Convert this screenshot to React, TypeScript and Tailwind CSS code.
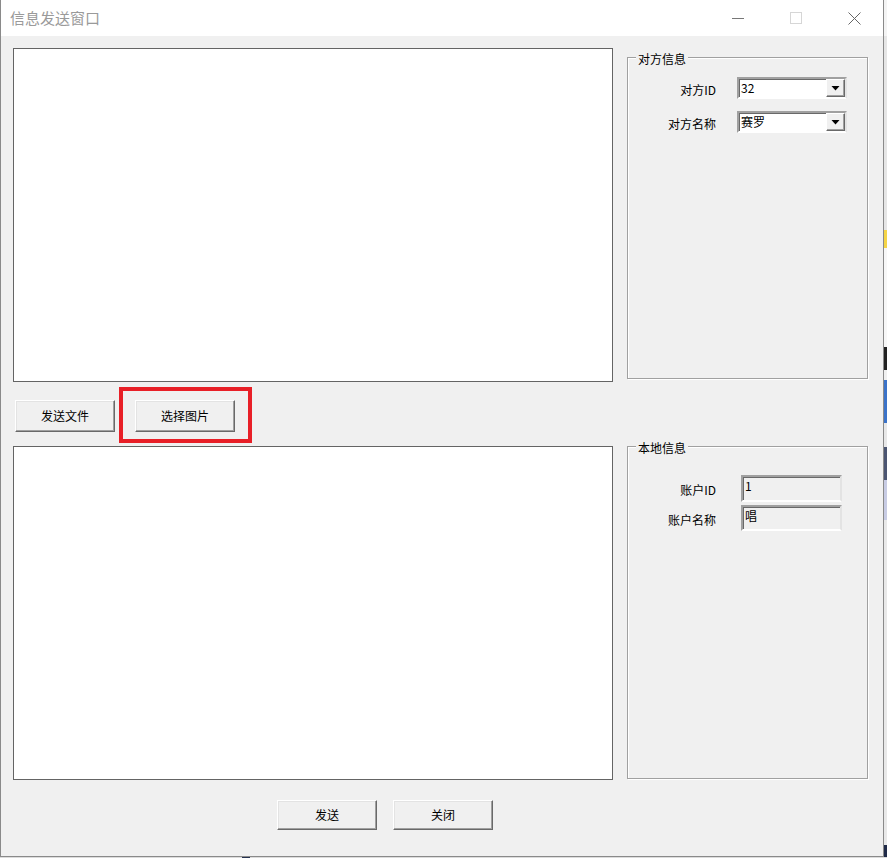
import React from "react";

const font = { fontFamily: '"Noto Sans CJK SC", "Noto Sans", sans-serif' };

function RaisedButton({ label, className = "" }: { label: string; className?: string }) {
  return (
    <button
      className={`h-full w-[100px] bg-[#f0f0f0] border border-t-white border-l-white border-b-[#696969] border-r-[#696969] shadow-[inset_-1px_-1px_0_#a0a0a0,inset_1px_1px_0_#e3e3e3] text-[12px] text-black leading-none ${className}`}
    >
      {label}
    </button>
  );
}

function Combo({ value }: { value: string }) {
  return (
    <div className="w-[110px] h-[22px] flex bg-white border-2 border-t-[#a0a0a0] border-l-[#a0a0a0] border-b-white border-r-[#e3e3e3] shadow-[inset_1px_1px_0_#696969]">
      <div className="flex-1 pl-[2px] pt-[1px] text-[12px] leading-[16px] text-black">{value}</div>
      <div className="w-[19px] h-[18px] flex items-center justify-center bg-[#f0f0f0] border border-t-white border-l-white border-b-[#696969] border-r-[#696969] shadow-[inset_-1px_-1px_0_#a0a0a0]">
        <svg width="9" height="5" viewBox="0 0 9 5">
          <path d="M0.5 0h8L4.5 4.5z" fill="#000" />
        </svg>
      </div>
    </div>
  );
}

function ReadBox({ value, h }: { value: string; h: string }) {
  return (
    <div
      className={`w-[101px] ${h} bg-[#f0f0f0] border-2 border-t-[#a0a0a0] border-l-[#a0a0a0] border-b-white border-r-[#e3e3e3] shadow-[inset_1px_1px_0_#696969] pl-[2px] pt-[1px] text-[12px] leading-[16px] text-black`}
    >
      {value}
    </div>
  );
}

function Group({ title, className, children }: { title: string; className: string; children: React.ReactNode }) {
  return (
    <div
      className={`relative w-[241px] border border-[#a0a0a0] shadow-[inset_1px_1px_0_#fff,1px_1px_0_#fff] ${className}`}
    >
      <span className="absolute left-[8px] -top-[7px] px-[2px] bg-[#f0f0f0] text-[12px] leading-[16px] text-black">
        {title}
      </span>
      {children}
    </div>
  );
}

function Row({ label, children, className = "" }: { label: string; children: React.ReactNode; className?: string }) {
  return (
    <div className={`flex items-center ${className}`}>
      <div className="w-[88px] pt-[3px] text-right text-[12px] leading-[16px] text-black">{label}</div>
      {children}
    </div>
  );
}

export default function App() {
  return (
    <div className="w-[887px] h-[858px] flex flex-col bg-[#dcdcdc] overflow-hidden" style={font}>
      <div className="flex h-[857px]">
        <div className="w-[884px] h-full flex flex-col border-l border-r border-b border-[#8a8a8a] bg-[#f0f0f0]">
          {/* title bar */}
          <div className="h-[36px] bg-white flex items-center">
            <span className="pl-[9px] text-[15px] text-[#9a9a9a]">信息发送窗口</span>
            <div className="ml-auto flex h-full">
              <div className="w-[58px] h-full flex items-center justify-center">
                <div className="w-[12px] h-[1px] bg-[#777]" />
              </div>
              <div className="w-[58px] h-full flex items-center justify-center">
                <div className="w-[12px] h-[12px] border border-[#d6d6d6]" />
              </div>
              <div className="w-[58px] h-full flex items-center justify-center">
                <svg width="13" height="13" viewBox="0 0 13 13">
                  <path d="M0.5 0.5l12 12M12.5 0.5l-12 12" stroke="#666" strokeWidth="1" />
                </svg>
              </div>
            </div>
          </div>

          {/* body */}
          <div className="flex-1 flex pl-[12px] pt-[12px]">
            <div className="w-[600px] flex flex-col">
              <div className="h-[334px] bg-white border border-[#646464]" />
              <div className="mt-[18px] h-[32px] flex">
                <RaisedButton label="发送文件" className="ml-[2px]" />
                <div className="relative ml-[20px] h-full">
                  <RaisedButton label="选择图片" />
                  <div className="absolute -left-[16px] -right-[17px] -top-[13px] -bottom-[11px] border-[4px] border-[#e81f27]" />
                </div>
              </div>
              <div className="mt-[14px] h-[334px] bg-white border border-[#646464]" />
              <div className="mt-[20px] h-[30px] flex">
                <RaisedButton label="发送" className="ml-[264px]" />
                <RaisedButton label="关闭" className="ml-[16px]" />
              </div>
            </div>

            <div className="ml-[14px] flex flex-col">
              <Group title="对方信息" className="mt-[9px] h-[322px] pt-[19px]">
                <Row label="对方ID">
                  <div className="ml-[21px]">
                    <Combo value="32" />
                  </div>
                </Row>
                <Row label="对方名称" className="mt-[12px]">
                  <div className="ml-[21px]">
                    <Combo value="赛罗" />
                  </div>
                </Row>
              </Group>

              <Group title="本地信息" className="mt-[67px] h-[333px] pt-[28px]">
                <Row label="账户ID">
                  <div className="ml-[25px]">
                    <ReadBox value="1" h="h-[27px]" />
                  </div>
                </Row>
                <Row label="账户名称" className="mt-[3px]">
                  <div className="ml-[25px]">
                    <ReadBox value="唱" h="h-[26px]" />
                  </div>
                </Row>
              </Group>
            </div>
          </div>
        </div>

        {/* desktop behind window */}
        <div className="w-[3px] h-full flex flex-col">
          <div className="h-[36px] bg-[#f4f4f4]" />
          <div className="h-[194px] bg-[#e6e6e6]" />
          <div className="h-[18px] bg-[#f5d547]" />
          <div className="h-[99px] bg-[#f7f7f7]" />
          <div className="h-[23px] bg-[#222]" />
          <div className="h-[10px] bg-[#f0f0f0]" />
          <div className="h-[43px] bg-[#3b73c9]" />
          <div className="h-[24px] bg-[#e8e8e8]" />
          <div className="h-[33px] bg-[#4b5571]" />
          <div className="h-[40px] bg-[#c8cce4]" />
          <div className="flex-1 bg-[#e9e9e9]" />
          <div className="h-[12px] bg-[#1f2a48]" />
        </div>
      </div>
      <div className="h-[1px] flex">
        <div className="w-[242px] bg-[#dcdcdc]" />
        <div className="w-[8px] bg-[#26324f]" />
        <div className="flex-1 bg-[#dcdcdc]" />
      </div>
    </div>
  );
}
